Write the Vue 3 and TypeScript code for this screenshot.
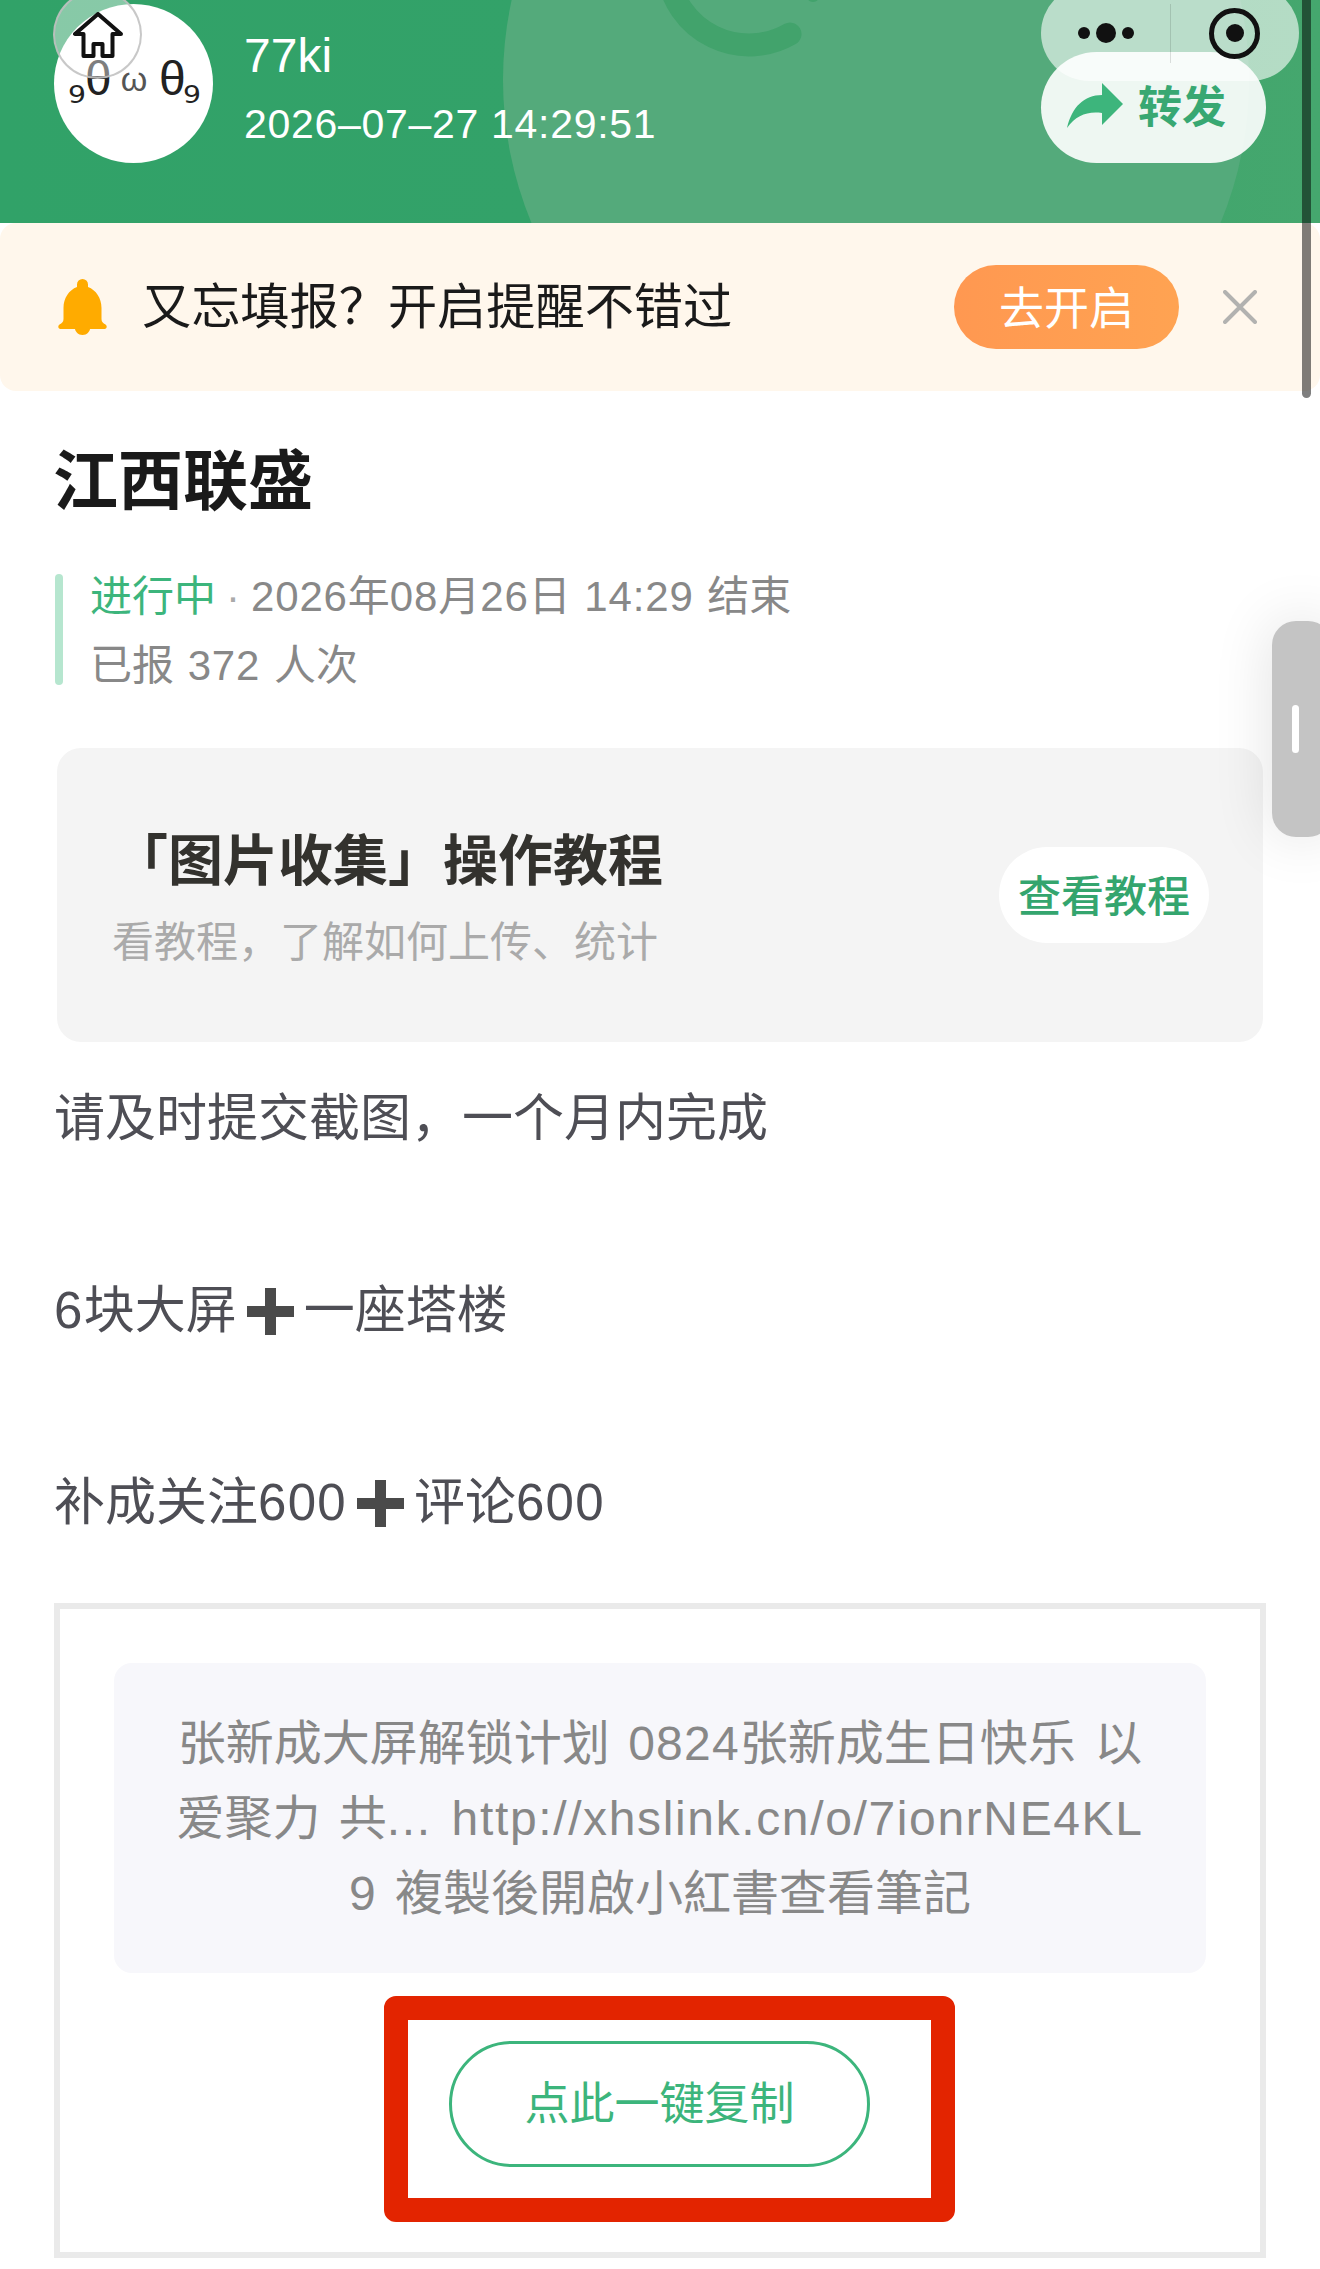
<template>
  <div class="page">
    <header class="hero">
      <svg class="hero-bg" viewBox="0 0 1320 223" width="1320" height="223">
        <circle cx="876" cy="80" r="373" fill="#54aa7b" />
        <path d="M790 34A82 82 0 0 1 668 -25" fill="none" stroke="#42a36c" stroke-width="23" stroke-linecap="round" />
        <circle cx="813" cy="-5" r="7" fill="#42a36c" />
      </svg>
      <div class="avatar">
        <span class="curl">₉</span>
        <span class="theta">θ</span>
        <span class="wave">ω</span>
        <span class="theta">θ</span>
        <span class="curl">₉</span>
      </div>
      <div class="who">
        <div class="name">77ki</div>
        <div class="stamp">2026–07–27 14:29:51</div>
      </div>
      <button class="home" aria-label="home">
        <svg viewBox="0 0 52 46" width="52" height="46">
          <path d="M26 2L3 22H11.500V44H21.500V32H30.500V44H40.500V22H49Z" fill="none" stroke="#111" stroke-width="4" stroke-linejoin="round" />
        </svg>
      </button>
      <button class="share">
        <svg viewBox="0 0 56 45" width="56" height="45">
          <path d="M35 0L56 21L35 42V30C21 28 9 32 0 45C5 24 17 12 35 12Z" fill="#3db57c" />
        </svg>
        <span>转发</span>
      </button>
      <div class="capsule">
        <div class="capsule-part">
          <i class="dot"></i><i class="dot big"></i><i class="dot"></i>
        </div>
        <div class="capsule-part last">
          <i class="target"></i>
        </div>
      </div>
    </header>

    <section class="notice">
      <svg class="bell" viewBox="0 0 49 56" width="49" height="56">
        <path d="M24.500 0A5.500 5.500 0 0 1 30 5.500V8C38 11 43.500 19 43.500 29V40C43.500 43 45 44 47.500 45.500C49.500 47 49 50 46.500 50H2.500C0 50 -0.500 47 1.500 45.500C4 44 5.500 43 5.500 40V29C5.500 19 11 11 19 8V5.500A5.500 5.500 0 0 1 24.500 0Z" fill="#ffab00" />
        <path d="M16.500 47.500H32.500C32 53 29 56 24.500 56C20 56 17 53 16.500 47.500Z" fill="#ffab00" />
      </svg>
      <div class="notice-text">又忘填报？开启提醒不错过</div>
      <button class="enable">去开启</button>
      <svg class="close" viewBox="0 0 34 34" width="34" height="34">
        <path d="M2 2L32 32M32 2L2 32" stroke="#b2b2b0" stroke-width="4" stroke-linecap="round" />
      </svg>
    </section>

    <h1 class="title">江西联盛</h1>

    <div class="status">
      <div class="status-line"><span class="live">进行中</span><span class="sep">·</span><span class="lat">2026</span>年<span class="lat">08</span>月<span class="lat">26</span>日 <span class="lat">14:29</span> 结束</div>
      <div class="status-line">已报 <span class="lat">372</span> 人次</div>
    </div>

    <div class="guide">
      <div class="guide-text">
        <div class="guide-title">「图片收集」操作教程</div>
        <div class="guide-sub">看教程，了解如何上传、统计</div>
      </div>
      <button class="guide-btn">查看教程</button>
    </div>

    <div class="desc">
      <p>请及时提交截图，一个月内完成</p>
      <p>&nbsp;</p>
      <p><span class="lat">6</span>块大屏<svg class="plus" viewBox="0 0 47 47" width="47" height="47"><path d="M18 0H29V18H47V29H29V47H18V29H0V18H18Z" fill="#4a4a4a" /></svg>一座塔楼</p>
      <p>&nbsp;</p>
      <p>补成关注<span class="lat">600</span><svg class="plus" viewBox="0 0 47 47" width="47" height="47"><path d="M18 0H29V18H47V29H29V47H18V29H0V18H18Z" fill="#4a4a4a" /></svg>评论<span class="lat">600</span></p>
    </div>

    <div class="copy-box">
      <div class="copy-text">
        张新成大屏解锁计划 <span class="lat">0824</span>张新成生日快乐 以<br />
        爱聚力 共<span class="lat link">... http://xhslink.cn/o/7ionrNE4KL</span><br />
        <span class="lat">9</span> 複製後開啟小紅書查看筆記
      </div>
      <div class="red-frame">
        <button class="copy-btn">点此一键复制</button>
      </div>
    </div>

    <div class="scrollbar"></div>
    <div class="side-handle"><i></i></div>
  </div>
</template>

<script setup lang="ts">
</script>

<style>
html,
body {
  margin: 0;
  background: #fff;
}
</style>

<style scoped>
.page {
  position: relative;
  width: 1320px;
  height: 2269px;
  overflow: hidden;
  background: #fff;
  font-family: "Liberation Sans", "Noto Sans CJK SC", sans-serif;
}

button {
  border: none;
  padding: 0;
  font-family: inherit;
}

.lat {
  letter-spacing: 0.025em;
}

.hero {
  position: relative;
  display: flex;
  height: 223px;
  padding: 4px 0 0 54px;
  box-sizing: border-box;
  overflow: hidden;
  background: linear-gradient(90deg, #31a268, #33a269 40%, #45a76e);
}

.hero-bg {
  position: absolute;
  left: 0;
  top: 0;
}

.avatar {
  position: relative;
  display: flex;
  align-items: flex-start;
  width: 159px;
  height: 159px;
  padding: 50px 0 0 14px;
  box-sizing: border-box;
  border-radius: 50%;
  background: #fff;
  color: #222;
}

.curl {
  width: 17px;
  margin-top: 9px;
  font-family: "DejaVu Sans", sans-serif;
  font-size: 44px;
  line-height: 50px;
}

.theta {
  width: 24px;
  font-size: 48px;
  line-height: 50px;
  text-align: center;
}

.wave {
  width: 50px;
  margin-top: 13px;
  font-size: 34px;
  line-height: 24px;
  text-align: center;
  color: #555;
}

.who {
  position: relative;
  margin-left: 31px;
  color: #fff;
}

.name {
  margin-top: 22px;
  font-size: 48px;
  line-height: 60px;
}

.stamp {
  margin-top: 13px;
  font-size: 41px;
  line-height: 50px;
  letter-spacing: 0.700px;
}

.home {
  position: absolute;
  left: 53px;
  top: -10px;
  display: flex;
  align-items: flex-start;
  justify-content: center;
  width: 89px;
  height: 89px;
  padding-top: 20px;
  box-sizing: border-box;
  border: 2px solid rgba(190, 190, 190, 0.85);
  border-radius: 50%;
  background: rgba(255, 255, 255, 0.42);
}

.share {
  position: absolute;
  left: 1041px;
  top: 52px;
  display: flex;
  align-items: center;
  gap: 15px;
  width: 225px;
  height: 111px;
  padding: 0 0 5px 26px;
  box-sizing: border-box;
  border-radius: 56px;
  background: rgba(255, 255, 255, 0.9);
  color: #38a872;
  font-size: 44px;
  font-weight: 700;
}

.share span {
  margin-bottom: 2px;
}

.capsule {
  position: absolute;
  left: 1041px;
  top: -15px;
  display: flex;
  width: 258px;
  height: 96px;
  border-radius: 48px;
  background: rgba(255, 255, 255, 0.6);
}

.capsule-part {
  position: relative;
  display: flex;
  align-items: center;
  justify-content: flex-start;
  gap: 6px;
  width: 129px;
  padding-left: 37px;
  box-sizing: border-box;
}

.capsule-part::after {
  content: "";
  position: absolute;
  right: -1px;
  top: 19px;
  width: 1px;
  height: 59px;
  background: rgba(0, 0, 0, 0.12);
}

.capsule-part.last {
  padding: 0 0 0 39px;
}

.capsule-part.last::after {
  display: none;
}

.dot {
  width: 12px;
  height: 12px;
  border-radius: 50%;
  background: #111;
}

.dot.big {
  width: 20px;
  height: 20px;
}

.target {
  position: relative;
  width: 51px;
  height: 51px;
  box-sizing: border-box;
  border: 5px solid #111;
  border-radius: 50%;
}

.target::after {
  content: "";
  position: absolute;
  left: 11.500px;
  top: 11.500px;
  width: 18px;
  height: 18px;
  border-radius: 50%;
  background: #111;
}

.notice {
  display: flex;
  align-items: center;
  height: 168px;
  padding: 0 63px 0 58px;
  box-sizing: border-box;
  border-radius: 16px;
  background: #fff7ec;
}

.notice-text {
  flex: 1;
  margin-left: 35px;
  font-size: 49.200px;
  color: #1a1a1a;
  line-height: 60px;
}

.enable {
  width: 225px;
  height: 84px;
  padding-bottom: 3px;
  border-radius: 42px;
  background: linear-gradient(90deg, #ff9851, #ffa352);
  color: #fff;
  font-size: 45px;
}

.close {
  margin-left: 44px;
}

.title {
  margin: 51px 0 0 53px;
  font-size: 65px;
  line-height: 80px;
  font-weight: 700;
  color: #1a1a1a;
}

.status {
  position: relative;
  display: flex;
  flex-direction: column;
  gap: 27px;
  margin: 52px 0 0 55px;
  padding: 2px 0 0 35px;
  font-size: 42px;
  line-height: 42px;
  color: #888;
  word-spacing: 2px;
}

.status .lat {
  letter-spacing: 0.02em;
}

.status::before {
  content: "";
  position: absolute;
  left: 0;
  top: 0;
  bottom: 2px;
  width: 8px;
  border-radius: 4px;
  background: #b6e6cf;
}

.live {
  color: #3cb57c;
}

.sep {
  margin: 0 11px 0 10px;
  color: #aaa;
}

.guide {
  display: flex;
  align-items: center;
  justify-content: space-between;
  height: 294px;
  margin: 61px 0 0 57px;
  width: 1206px;
  padding: 0 54px 0 55px;
  box-sizing: border-box;
  border-radius: 24px;
  background: #f4f4f4;
}

.guide-title {
  margin: 4px 0 0 1px;
  font-size: 55px;
  line-height: 70px;
  font-weight: 700;
  color: #33322e;
}

.guide-sub {
  margin-top: 21px;
  font-size: 42px;
  line-height: 52px;
  color: #aaa;
}

.guide-btn {
  width: 210px;
  height: 96px;
  padding-bottom: 4px;
  border-radius: 48px;
  background: #fff;
  color: #34a56e;
  font-size: 43px;
  font-weight: 500;
}

.desc {
  margin: 29px 0 0 54px;
  font-size: 51px;
  line-height: 96px;
  color: #4e4e55;
}

.desc p {
  display: flex;
  align-items: center;
  margin: 0;
  height: 96px;
}

.plus {
  margin: 0 10px;
}

.copy-box {
  width: 1212px;
  height: 655px;
  margin: 52px 0 0 54px;
  padding: 54px;
  box-sizing: border-box;
  border: 6px solid #eaeaea;
}

.copy-text {
  height: 310px;
  padding-top: 43px;
  box-sizing: border-box;
  border-radius: 18px;
  background: #f7f7fb;
  color: #888;
  font-size: 48px;
  line-height: 75px;
  text-align: center;
  white-space: nowrap;
  word-spacing: 5px;
}

.link {
  letter-spacing: 0.034em;
}

.red-frame {
  width: 571px;
  height: 226px;
  margin: 23px 0 0 270px;
  padding: 21px 0 0 41px;
  box-sizing: border-box;
  border: 24px solid #e32400;
  border-radius: 12px;
}

.copy-btn {
  width: 421px;
  height: 126px;
  padding-bottom: 7px;
  border: 3px solid #3cb57c;
  border-radius: 63px;
  background: #fff;
  color: #3cb57c;
  font-size: 45px;
}

.scrollbar {
  position: absolute;
  left: 1302px;
  top: -10px;
  width: 9px;
  height: 408px;
  border-radius: 5px;
  background: rgba(0, 0, 0, 0.5);
}

.side-handle {
  position: absolute;
  left: 1272px;
  top: 621px;
  display: flex;
  align-items: center;
  width: 60px;
  height: 216px;
  padding-left: 20px;
  box-sizing: border-box;
  border-radius: 24px;
  background: #c4c4c4;
  box-shadow: 0 0 60px rgba(0, 0, 0, 0.12);
}

.side-handle i {
  width: 7px;
  height: 48px;
  border-radius: 4px;
  background: #fff;
}
</style>
